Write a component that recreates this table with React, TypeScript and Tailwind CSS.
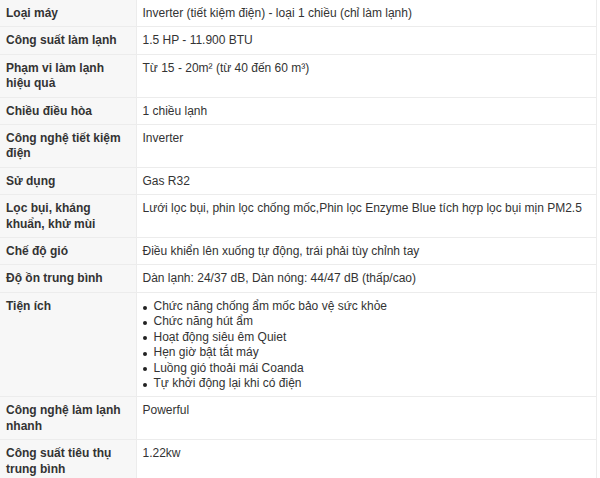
import React from 'react';

interface Spec {
  label: string;
  value: string | string[];
}

const specs: Spec[] = [
  { label: 'Loại máy', value: 'Inverter (tiết kiệm điện) - loại 1 chiều (chỉ làm lạnh)' },
  { label: 'Công suất làm lạnh', value: '1.5 HP - 11.900 BTU' },
  { label: 'Phạm vi làm lạnh hiệu quả', value: 'Từ 15 - 20m² (từ 40 đến 60 m³)' },
  { label: 'Chiều điều hòa', value: '1 chiều lạnh' },
  { label: 'Công nghệ tiết kiệm điện', value: 'Inverter' },
  { label: 'Sử dụng', value: 'Gas R32' },
  {
    label: 'Lọc bụi, kháng khuẩn, khử mùi',
    value: 'Lưới lọc bụi, phin lọc chống mốc,Phin lọc Enzyme Blue tích hợp lọc bụi mịn PM2.5',
  },
  { label: 'Chế độ gió', value: 'Điều khiển lên xuống tự động, trái phải tùy chỉnh tay' },
  { label: 'Độ ồn trung bình', value: 'Dàn lạnh: 24/37 dB, Dàn nóng: 44/47 dB (thấp/cao)' },
  {
    label: 'Tiện ích',
    value: [
      'Chức năng chống ẩm mốc bảo vệ sức khỏe',
      'Chức năng hút ẩm',
      'Hoạt động siêu êm Quiet',
      'Hẹn giờ bật tắt máy',
      'Luồng gió thoải mái Coanda',
      'Tự khởi động lại khi có điện',
    ],
  },
  { label: 'Công nghệ làm lạnh nhanh', value: 'Powerful' },
  { label: 'Công suất tiêu thụ trung bình', value: '1.22kw' },
];

export default function App() {
  return (
    <div className="w-[600px] h-[478px] overflow-hidden bg-white font-['Liberation_Sans',Arial,sans-serif] text-[12px] leading-[15.4px] text-[#333]">
      <table className="w-[597px] border-collapse table-fixed">
        <colgroup>
          <col className="w-[136px]" />
          <col />
        </colgroup>
        <tbody>
          {specs.map((s) => (
            <tr key={s.label} className="border-b border-[#ececec]">
              <td className="align-top bg-[#f7f7f7] pl-[6px] pr-[6px] pt-[6px] pb-[5px] font-bold">
                {s.label}
              </td>
              <td className="align-top border-l border-r border-[#ececec] pl-[6px] pr-2 pt-[6px] pb-[5px]">
                {Array.isArray(s.value) ? (
                  <ul>
                    {s.value.map((v) => (
                      <li key={v} className="flex items-center">
                        <span className="w-[11px] shrink-0 flex">
                          <span className="w-[4px] h-[4px] rounded-full bg-[#222] mt-[2px]" />
                        </span>
                        <span>{v}</span>
                      </li>
                    ))}
                  </ul>
                ) : (
                  s.value
                )}
              </td>
            </tr>
          ))}
        </tbody>
      </table>
    </div>
  );
}
